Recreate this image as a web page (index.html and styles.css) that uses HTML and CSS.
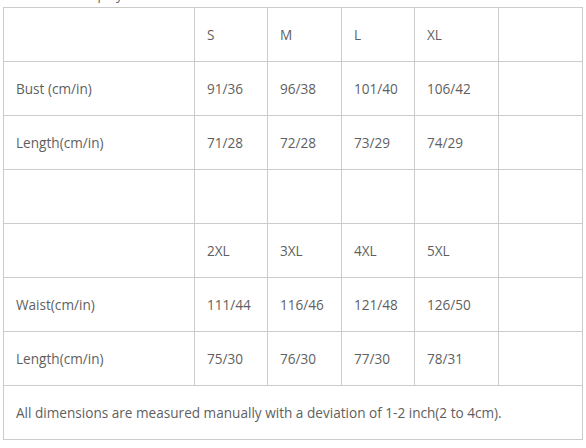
FILE: index.html
```html
<!DOCTYPE html>
<html>
<head>
<meta charset="utf-8">
<link rel="stylesheet" href="styles.css">
</head>
<body>
<div class="page">
  <p class="caption">Size display</p>
  <table class="sizes">
    <colgroup>
      <col class="c-label"><col class="c-s"><col class="c-m"><col class="c-l"><col class="c-xl"><col class="c-x">
    </colgroup>
    <tr><td></td><td>S</td><td>M</td><td>L</td><td>XL</td><td></td></tr>
    <tr><td>Bust (cm/in)</td><td>91/36</td><td>96/38</td><td>101/40</td><td>106/42</td><td></td></tr>
    <tr><td>Length(cm/in)</td><td>71/28</td><td>72/28</td><td>73/29</td><td>74/29</td><td></td></tr>
    <tr><td></td><td></td><td></td><td></td><td></td><td></td></tr>
    <tr><td></td><td>2XL</td><td>3XL</td><td>4XL</td><td>5XL</td><td></td></tr>
    <tr><td>Waist(cm/in)</td><td>111/44</td><td>116/46</td><td>121/48</td><td>126/50</td><td></td></tr>
    <tr><td>Length(cm/in)</td><td>75/30</td><td>76/30</td><td>77/30</td><td>78/31</td><td></td></tr>
    <tr><td colspan="6">All dimensions are measured manually with a deviation of 1-2 inch(2 to 4cm).</td></tr>
  </table>
</div>
</body>
</html>
```
FILE: styles.css
```css
html, body {
  margin: 0;
  padding: 0;
  background: #fff;
}
.page {
  padding: 0 0 0 3px;
  font-family: "Open Sans", "Liberation Sans", sans-serif;
  color: #5f5f5f;
  font-size: 13.6px;
}
.caption {
  margin: -11px 0 0 0;
  height: 18px;
  line-height: 13px;
  padding-left: 50px;
  font-size: 13px;
}
.sizes {
  border-collapse: collapse;
  width: 579px;
  table-layout: fixed;
}
.sizes td {
  border: 1px solid #ccc;
  height: 54px;
  padding: 0 0 0 12px;
  box-sizing: border-box;
  vertical-align: middle;
  white-space: nowrap;
}
.c-label { width: 191px; }
.c-s { width: 73px; }
.c-m { width: 74px; }
.c-l { width: 73px; }
.c-xl { width: 84px; }
.c-x { width: 84px; }
```
